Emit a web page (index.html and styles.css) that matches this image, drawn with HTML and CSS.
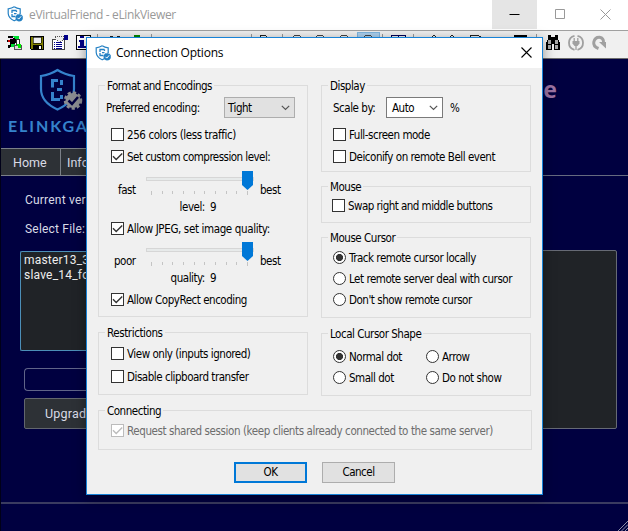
FILE: index.html
```html
<!DOCTYPE html>
<html lang="en">
<head>
<meta charset="utf-8">
<title>eVirtualFriend - eLinkViewer</title>
<link rel="stylesheet" href="styles.css">
</head>
<body>
<svg width="0" height="0" class="defs">
  <symbol id="shield" viewBox="0 0 16 16">
    <path d="M7.2 .8Q4.8 2.4 1.2 2.8V7.500Q1.500 12 7.200 14.800Q9 14 10 13M7.200 .8Q9.800 2.500 13.200 2.800V8" fill="none" stroke="#2581c4" stroke-width="1.200"/>
    <path d="M9.500 4.500H5V7M5 8V10.500H8.500M7 7.700H9.500M9.500 4.500V6" fill="none" stroke="#2581c4" stroke-width="1.300"/>
    <circle cx="12.200" cy="11.700" r="3.500" fill="#2581c4" stroke="#2581c4" stroke-width=".8" stroke-dasharray="1 1"/>
    <path d="M10.500 11.800l1.300 1.300 2.400-2.800" fill="none" stroke="#fff"/>
  </symbol>
  <symbol id="chev" viewBox="0 0 9 6"><path d="M.8 .8L4.500 4.500 8.200 .8" fill="none" stroke="#555" stroke-width="1.200"/></symbol>
  <symbol id="tick" viewBox="0 0 13 13"><path d="M2 6.200L5.200 9.400 11.200 3.400" fill="none" stroke="currentColor" stroke-width="1.400"/></symbol>
</svg>

<div class="app">
  <header class="titlebar">
    <svg class="appicon" width="16" height="16"><use href="#shield"/></svg>
    <span class="apptitle">eVirtualFriend - eLinkViewer</span>
    <div class="winbtn active"><svg width="11" height="11"><path d="M.5 5.500h10" stroke="#000"/></svg></div>
    <div class="winbtn"><svg width="11" height="11"><path d="M.5 .5h9v9h-9z" fill="none" stroke="#999"/></svg></div>
    <div class="winbtn"><svg width="11" height="11"><path d="M.5 .5l10 10M10.500 .5l-10 10" stroke="#999"/></svg></div>
  </header>
  <div class="toolbar">
    <svg width="628" height="28" shape-rendering="crispEdges">
      <g><path d="M8 5h5v2h3v2h2v3h-3v2h-3l-2 3h-2v-3h2v-3h-3V9h3V7H8z" fill="#000"/><path d="M10 7h3v1h-3z" fill="#f8f"/><path d="M13 5h6v3h-4z" fill="#0d3"/><path d="M11 13h4v3h-4z" fill="#0d3"/><path d="M14.500 14.500h7v4h-7z" fill="#ddd" stroke="#555"/><path d="M16.500 8.500h3v5h-3z" fill="#fff" stroke="#333"/><path d="M17 13h4v4h-3z" fill="#0e0"/><path d="M8 9h2v2h-2z" fill="#c00"/></g>
      <g><path d="M30.500 5.500h13v13h-12l-1-1z" fill="#808000" stroke="#000"/><path d="M33 6h8v6h-8z" fill="#eee" stroke="#000" stroke-width=".6"/><path d="M33 14h9v5h-9z" fill="#000"/><path d="M39 15h2v3h-2z" fill="#fff"/></g>
      <g><path d="M52.500 8.500h12v10h-12z" fill="#fff" stroke="#444"/><path d="M55 5h8v4l-4 2-4-3z" fill="#eee" stroke="#555" stroke-dasharray="1 1"/><path d="M64 4h4v5h-4z" fill="#008"/><path d="M54 11h1m1 0h6m-8 2h1m1 0h6m-8 2h1m1 0h6m-8 2h1m1 0h6" stroke="#008"/></g>
      <g><path d="M76.500 4.500h14v14h-14z" fill="#fff" stroke="#000"/><path d="M80 5h4v2h-4zM79 9h5v6h2v2h-8v-2h2v-4h-1z" fill="#008"/></g>
      <g stroke="#999"><path d="M97.500 3v22M151.500 3v22M251.500 3v22M282.500 3v22M382.500 3v22M413.500 3v22M536.500 3v22"/></g>
      <path d="M357.500 1.500h22v22h-22z" fill="#abd0ee" stroke="#7fb5df"/>
      <g fill="none" stroke="#222"><path d="M110 5.500h3m4 0h3M260.500 8V4.500h5l2 2"/><path d="M293 6l2-2h4l2 2M316 6l2-2h4l2 2M340 6l2-2h4l2 2M364 6l2-2h4l2 2" stroke="#444"/><path d="M391.500 8V4.500h14V8M398.500 4v4" stroke="#005"/><path d="M432 6l2-2 2 2M450 6l2-2 2 2M470.500 8V4.500h8l3 2"/></g>
      <path d="M134 4h6v3h-6z" fill="#080"/><path d="M514 4h13v5h-13z" fill="#000"/>
      <g><path d="M548 4h3v2h4V4h3v4l2 4v7h-6v-6h-2v6h-6v-7l2-4z" fill="#000"/><path d="M548 9h3v4h-3zM555 9h3v4h-3zM548 14h3v4h-3zM555 14h3v4h-3z" fill="#aaa"/></g>
      <g shape-rendering="auto" fill="none" stroke="#a0a0a0" stroke-width="1.800"><path d="M574.500 4.800a7.200 7.200 0 0 0 0 14M577.500 4.800a7.200 7.200 0 0 1 0 14"/><path d="M574.200 7v3M577.800 7v3M576 14v5" stroke-width="1.300"/><path d="M572.500 10h7v2.500l-2 2.500h-3l-2-2.500z" fill="#a0a0a0" stroke="none"/></g>
      <g shape-rendering="auto"><path d="M598.500 17.500Q593 15.500 593.800 11Q595 6 599.500 6.200Q604 7 603.500 12" fill="none" stroke="#a0a0a0" stroke-width="3"/><path d="M599 11h7v6.500z" fill="#a0a0a0"/></g>
    </svg>
  </div>

  <main class="remote">
    <div class="banner">
      <div class="brand">
        <svg width="46" height="44" viewBox="0 0 46 44">
          <path d="M18.500 2Q11.500 6.500 2 8V21Q2 34 18.500 41.500Q35 34 35 21V8Q25.500 6.500 18.500 2Z" fill="none" stroke="#3583cc" stroke-width="2.200"/>
          <path d="M19 12.500H13.500V19.500M13.500 24V31.500H21M18 21.500h5M22.500 12v5M22.500 27v4" fill="none" stroke="#3583cc" stroke-width="3"/>
          <circle cx="34" cy="32.500" r="7.500" fill="#8a8c90" stroke="#8a8c90" stroke-width="3.500" stroke-dasharray="3 2"/>
          <path d="M29.500 32.500l3.500 3.500 6-7" fill="none" stroke="#000040" stroke-width="2.500"/>
        </svg>
        <div class="brandname">ELINKGA</div>
      </div>
      <div class="heading">e</div>
    </div>
    <nav class="tabs"><div class="tab home">Home</div><div class="tab info">Info</div></nav>
    <section class="content">
      <div class="left">
        <div class="label">Current ver</div>
        <div class="label second">Select File:</div>
        <div class="files"><div>master13_3</div><div>slave_14_fo</div></div>
        <div class="progress"></div>
        <div class="upgrade">Upgrad</div>
      </div>
      <div class="log"></div>
    </section>
    <footer class="foot"><svg width="10" height="10"><path d="M0 10L10 0M3.500 10L10 3.500M7 10l3-3" stroke="#8d90a8"/></svg></footer>
  </main>
</div>

<div class="dialog">
  <div class="dtitle"><svg width="16" height="16"><use href="#shield"/></svg><span>Connection Options</span><svg class="close" width="11" height="11"><path d="M.5 .5l10 10M10.500 .5l-10 10" stroke="#000" stroke-width="1.100"/></svg></div>
  <div class="dbody">
    <div class="cols">
      <div class="col">
        <div class="group format">
          <div class="legend"><span class="t tighter">Format and Encodings</span></div>
          <div class="row sel"><span class="t looser">Preferred encoding:</span><div class="select tight"><span class="t">Tight</span><svg width="9" height="6"><use href="#chev"/></svg></div></div>
          <div class="row r22 gap5"><i class="box"></i><span class="t looser">256 colors (less traffic)</span></div>
          <div class="row r22"><i class="box"><svg><use href="#tick"/></svg></i><span class="t tighter">Set custom compression level:</span></div>
          <div class="slider">
            <span class="t lo">fast</span>
            <div class="scale"><div class="track"></div><svg class="thumb" width="11" height="19"><path d="M0 0h11v14l-5.500 5L0 14z" fill="#0078d7"/></svg><div class="ticks"><i></i><i></i><i></i><i></i><i></i><i></i><i></i><i></i><i></i><i></i></div></div>
            <span class="t hi">best</span>
          </div>
          <div class="row value"><span class="t">level:</span><span class="t">9</span></div>
          <div class="row r22"><i class="box"><svg><use href="#tick"/></svg></i><span class="t loosest">Allow JPEG, set image quality:</span></div>
          <div class="slider quality">
            <span class="t lo">poor</span>
            <div class="scale"><div class="track"></div><svg class="thumb" width="11" height="19"><path d="M0 0h11v14l-5.500 5L0 14z" fill="#0078d7"/></svg><div class="ticks"><i></i><i></i><i></i><i></i><i></i><i></i><i></i><i></i><i></i><i></i></div></div>
            <span class="t hi">best</span>
          </div>
          <div class="row value"><span class="t">quality:</span><span class="t">9</span></div>
          <div class="row r22"><i class="box"><svg><use href="#tick"/></svg></i><span class="t">Allow CopyRect encoding</span></div>
        </div>
        <div class="group restrictions">
          <div class="legend"><span class="t looser">Restrictions</span></div>
          <div class="row r23 gap1"><i class="box"></i><span class="t">View only (inputs ignored)</span></div>
          <div class="row r23"><i class="box"></i><span class="t">Disable clipboard transfer</span></div>
        </div>
      </div>
      <div class="col">
        <div class="group display">
          <div class="legend"><span class="t">Display</span></div>
          <div class="row sel"><span class="t scale-label">Scale by:</span><div class="select auto"><span class="t">Auto</span><svg width="9" height="6"><use href="#chev"/></svg></div><span class="t pct">%</span></div>
          <div class="row r22 gap5"><i class="box"></i><span class="t">Full-screen mode</span></div>
          <div class="row r22"><i class="box"></i><span class="t">Deiconify on remote Bell event</span></div>
        </div>
        <div class="group mouse">
          <div class="legend"><span class="t">Mouse</span></div>
          <div class="row r22 swap"><i class="box"></i><span class="t tighter">Swap right and middle buttons</span></div>
        </div>
        <div class="group cursor">
          <div class="legend"><span class="t">Mouse Cursor</span></div>
          <div class="row r21 gap1"><i class="radio on"></i><span class="t">Track remote cursor locally</span></div>
          <div class="row r21"><i class="radio"></i><span class="t">Let remote server deal with cursor</span></div>
          <div class="row r21"><i class="radio"></i><span class="t">Don't show remote cursor</span></div>
        </div>
        <div class="group shape">
          <div class="legend"><span class="t">Local Cursor Shape</span></div>
          <div class="pair gap4"><div class="row r21"><i class="radio on"></i><span class="t">Normal dot</span></div><div class="row r21"><i class="radio"></i><span class="t">Arrow</span></div></div>
          <div class="pair"><div class="row r21"><i class="radio"></i><span class="t">Small dot</span></div><div class="row r21"><i class="radio"></i><span class="t">Do not show</span></div></div>
        </div>
      </div>
    </div>
    <div class="group connecting">
      <div class="legend"><span class="t">Connecting</span></div>
      <div class="row r22 disabled"><i class="box"><svg><use href="#tick"/></svg></i><span class="t looser">Request shared session (keep clients already connected to the same server)</span></div>
    </div>
    <div class="actions"><div class="btn primary">OK</div><div class="btn">Cancel</div></div>
  </div>
</div>
</body>
</html>
```
FILE: styles.css
```css
* { box-sizing: border-box; }
body { margin: 0; width: 628px; height: 531px; overflow: hidden; font-family: "DejaVu Sans Condensed", "DejaVu Sans", sans-serif; font-size: 11.5px; color: #000; }
svg { display: block; flex: none; }
.defs { position: absolute; }
.app { height: 531px; display: flex; flex-direction: column; background: #000040; }
.titlebar { height: 30px; background: #fff; display: flex; align-items: flex-start; flex: none; }
.appicon { margin: 6px 6px 0 7px; }
.apptitle { flex: 1; line-height: 29px; font-family: "Open Sans", sans-serif; font-size: 12px; letter-spacing: -.34px; color: #999; }
.winbtn { width: 46px; height: 29px; display: flex; align-items: center; justify-content: center; }
.winbtn:last-child { width: 45px; }
.winbtn.active { width: 45px; background: #e5e5e5; }
.toolbar { height: 29px; flex: none; background: #f0f0f0; border-top: 1px solid #a0a0a0; border-bottom: 1px solid #6d6d6d; overflow: hidden; }
.toolbar svg { height: 28px; }
.remote { flex: 1; display: flex; flex-direction: column; border-left: 1px solid #000018; font-family: Roboto, sans-serif; color: #d9dbe6; }
.banner { height: 89px; flex: none; display: flex; justify-content: space-between; }
.brand { padding: 9px 0 0 7px; }
.brand svg { margin-left: 31px; }
.brandname { font: 700 16px/20px Lato, sans-serif; letter-spacing: 1.9px; color: #3583cc; margin-top: 4px; }
.heading { font: 700 23px/30px "Noto Sans", sans-serif; color: #9c74a4; margin: 15px 71px 0 0; }
.tabs { height: 28px; flex: none; display: flex; border-bottom: 1px solid #666a80; }
.tab { height: 28px; border: 1px solid #7b8088; background: #2d3136; font-size: 12.500px; line-height: 27px; }
.home { width: 60px; padding-left: 12px; border-left: 0; }
.info { width: 70px; padding-left: 6px; border-left: 0; }
.content { height: 328px; flex: none; display: flex; justify-content: space-between; padding-right: 11px; border-bottom: 2px solid #3a3b60; font-size: 12px; letter-spacing: .2px; }
.left { padding-left: 19px; width: 130px; }
.label { margin: 15px 0 0 5px; line-height: 18px; white-space: nowrap; }
.label.second { margin-top: 11px; }
.files { height: 100px; margin-top: 13px; border: 1px solid #4c8fb8; border-right: 0; border-radius: 2px 0 0 2px; background: #202327; line-height: 15px; padding: 1px 0 0 3px; white-space: nowrap; color: #eee; }
.progress { height: 23px; margin: 17px 0 0 4px; border: 1px solid #606488; border-right: 0; border-radius: 4px 0 0 4px; }
.upgrade { height: 31px; margin: 7px 0 0 4px; border: 1px solid #62666e; background: #2d3136; border-radius: 2px; line-height: 29px; padding-left: 20px; font-size: 12.500px; }
.log { width: 90px; height: 179px; margin-top: 74px; border: 1px solid #666a75; border-radius: 0 2px 2px 0; background: #202327; }
.foot { flex: 1; display: flex; justify-content: flex-end; align-items: flex-end; }

.dialog { position: absolute; left: 86px; top: 37px; width: 457px; height: 458px; border: 1px solid #1883d7; background: #f0f0f0; box-shadow: 0 3px 12px rgba(0,0,0,.4); letter-spacing: -.47px; }
.dtitle { height: 30px; background: #fff; display: flex; align-items: center; padding: 0 10px 0 8px; }
.dtitle span { flex: 1; margin-left: 5px; font: 12px/28px "Open Sans", sans-serif; letter-spacing: -.22px; }
.close { margin-top: -2px; }
.dbody { padding: 17px 11px 0; }
.cols { display: grid; grid-template-columns: 210px 210px; column-gap: 13px; }
.col { display: flex; flex-direction: column; }
.group { border: 1px solid #dcdcdc; padding-left: 12px; }
.format { height: 232px; }
.restrictions, .shape { height: 63px; margin-top: 15px; }
.display { height: 87px; padding-left: 11px; }
.mouse { height: 37px; margin-top: 14px; padding-left: 10px; }
.cursor { height: 81px; margin-top: 14px; padding-left: 11px; }
.shape { padding-left: 11px; }
.connecting { height: 40px; margin-top: 14px; width: 434px; }
.legend { width: fit-content; height: 16px; margin: -8px 0 0 -6px; padding: 0 2px; background: #f0f0f0; line-height: 15px; }
.display .legend, .cursor .legend, .shape .legend { margin-left: -5px; }
.mouse .legend { margin-left: -4px; }
.t { white-space: pre; line-height: 16px; }
.tighter { letter-spacing: -.53px; }
.looser { letter-spacing: -.41px; }
.loosest { letter-spacing: -.37px; }
.box + .t { padding-top: 1px; }
.row { display: flex; align-items: center; }
.sel { height: 21px; margin-top: 3px; }
.format .sel { margin-left: -5px; justify-content: space-between; padding-right: 12px; }
.select { height: 21px; display: flex; align-items: center; justify-content: space-between; padding: 0 4px 0 3px; }
.tight { width: 71px; background: #e1e1e1; border: 1px solid #adadad; }
.scale-label { width: 53px; }
.auto { width: 57px; background: #fff; border: 1px solid #7a7a7a; padding-left: 5px; }
.pct { margin-left: 7px; }
.r22 { height: 22px; }
.r23 { height: 23px; }
.r21 { height: 21px; }
.gap5 { margin-top: 5px; }
.gap4 { margin-top: 4px; }
.gap1 { margin-top: 1px; }
.swap { margin-top: -1px; }
.box, .radio { width: 13px; height: 13px; background: #fff; border: 1px solid #333; margin-right: 3px; flex: none; }
.box svg { width: 13px; height: 13px; margin: -1px; color: #333; }
.radio { border-radius: 50%; }
.radio.on { background: radial-gradient(circle, #333 0 3.2px, #fff 3.900px); }
.slider { display: flex; height: 28px; margin-top: 4px; }
.slider .t { margin-top: 11px; }
.lo { width: 35px; padding-left: 7px; }
.quality .lo { padding-left: 3px; }
.hi { margin-left: 6px; }
.scale { position: relative; width: 108px; padding-top: 6px; }
.track { height: 4px; border: 1px solid #d6d6d6; background: #e7eaea; }
.thumb { position: absolute; right: 1px; top: 0; }
.ticks { display: flex; justify-content: space-between; margin: 10px 6px 0 5px; }
.ticks i { width: 1px; height: 3px; background: #c4c4c4; }
.ticks i:first-child, .ticks i:last-child { height: 4px; }
.value { height: 16px; margin-bottom: 2px; justify-content: flex-end; gap: 5px; padding-right: 91px; }
.slider.quality { height: 26px; margin-top: 3px; }
.quality + .value { margin-top: 2px; }
.pair { display: grid; grid-template-columns: 93px 1fr; }
.disabled { color: #6d6d6d; }
.disabled .box { border-color: #bcbcbc; }
.disabled .box svg { color: #bcbcbc; }
.actions { display: flex; gap: 15px; margin: 12px 0 0 136px; }
.btn { width: 73px; height: 21px; background: #e1e1e1; border: 1px solid #adadad; line-height: 19px; text-align: center; }
.primary { border: 2px solid #0078d7; line-height: 17px; }
```
